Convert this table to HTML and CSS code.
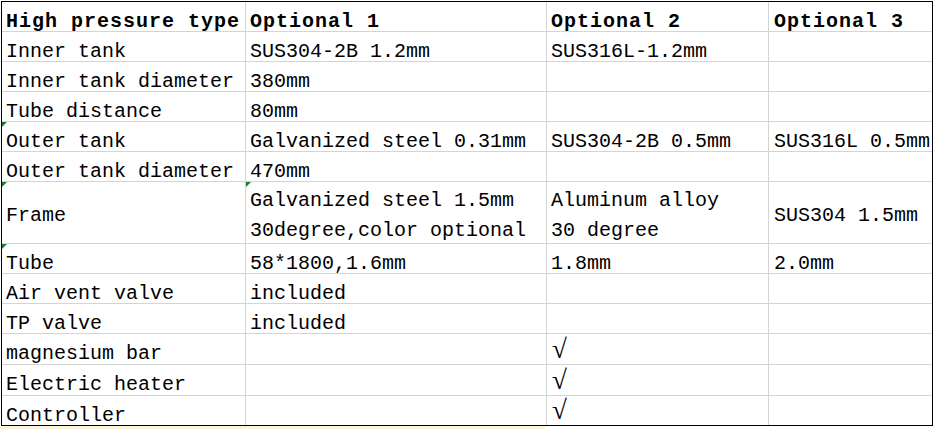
FILE: index.html
```html
<!DOCTYPE html>
<html lang="en">
<head>
    <meta charset="UTF-8">
    <meta name="viewport" content="width=device-width, initial-scale=1.0">
    <title>High pressure type</title>
    <link rel="stylesheet" href="styles.css">
</head>
<body>

<div class="sheet">
    <div class="cell head">High pressure type</div>
    <div class="cell head">Optional 1</div>
    <div class="cell head">Optional 2</div>
    <div class="cell head last">Optional 3</div>

    <div class="cell">Inner tank</div>
    <div class="cell">SUS304-2B 1.2mm</div>
    <div class="cell">SUS316L-1.2mm</div>
    <div class="cell last"></div>

    <div class="cell">Inner tank diameter</div>
    <div class="cell">380mm</div>
    <div class="cell"></div>
    <div class="cell last"></div>

    <div class="cell">Tube distance</div>
    <div class="cell">80mm</div>
    <div class="cell"></div>
    <div class="cell last"></div>

    <div class="cell flag">Outer tank</div>
    <div class="cell">Galvanized steel 0.31mm</div>
    <div class="cell">SUS304-2B 0.5mm</div>
    <div class="cell last">SUS316L 0.5mm</div>

    <div class="cell">Outer tank diameter</div>
    <div class="cell">470mm</div>
    <div class="cell"></div>
    <div class="cell last"></div>

    <div class="cell tall flag">Frame</div>
    <div class="cell tall flag">Galvanized steel 1.5mm<br>30degree,color optional</div>
    <div class="cell tall">Aluminum alloy<br>30 degree</div>
    <div class="cell tall last">SUS304 1.5mm</div>

    <div class="cell flag">Tube</div>
    <div class="cell">58*1800,1.6mm</div>
    <div class="cell">1.8mm</div>
    <div class="cell last">2.0mm</div>

    <div class="cell">Air vent valve</div>
    <div class="cell">included</div>
    <div class="cell"></div>
    <div class="cell last"></div>

    <div class="cell">TP valve</div>
    <div class="cell">included</div>
    <div class="cell"></div>
    <div class="cell last"></div>

    <div class="cell">magnesium bar</div>
    <div class="cell"></div>
    <div class="cell mark"><span class="tick">√</span></div>
    <div class="cell last"></div>

    <div class="cell">Electric heater</div>
    <div class="cell"></div>
    <div class="cell mark"><span class="tick">√</span></div>
    <div class="cell last"></div>

    <div class="cell">Controller</div>
    <div class="cell"></div>
    <div class="cell mark"><span class="tick">√</span></div>
    <div class="cell last"></div>
</div>
<div class="strip"></div>

</body>
</html>
```
FILE: styles.css
```css
body {
    margin: 0;
    padding: 1px 0 0 1px;
    background: #fff;
    font-family: 'Liberation Mono', 'DejaVu Sans Mono', monospace;
    font-size: 20px;
    color: #000;
}
.sheet {
    display: grid;
    grid-template-columns: 243px 300px 221px 163px;
    grid-template-rows: 29px 29px 29px 29px 29px 29px 61px 29px 29px 29px 30px 30px 29px;
    gap: 1px;
    width: max-content;
    background: #d4d4d4;
    border: 1px solid #000;
}
.cell {
    position: relative;
    display: flex;
    align-items: center;
    padding: 10px 0 0 4px;
    background: #fff;
    line-height: 30px;
    white-space: nowrap;
}
.cell.last {
    padding-left: 5px;
}
.cell.tall {
    padding-top: 7px;
}
.cell.mark {
    padding-top: 0;
}
.head {
    font-weight: bold;
    letter-spacing: 1px;
}
.flag::before {
    content: "";
    position: absolute;
    top: 0;
    left: 0;
    border-top: 5px solid #1f7a35;
    border-right: 5px solid transparent;
}
.tick {
    font-family: 'Liberation Serif', 'DejaVu Serif', serif;
    font-size: 27px;
    line-height: 1;
    margin-left: 1px;
}
.strip {
    width: 545px;
    height: 3px;
    margin-left: -1px;
    background: #fdf3da;
}
```
